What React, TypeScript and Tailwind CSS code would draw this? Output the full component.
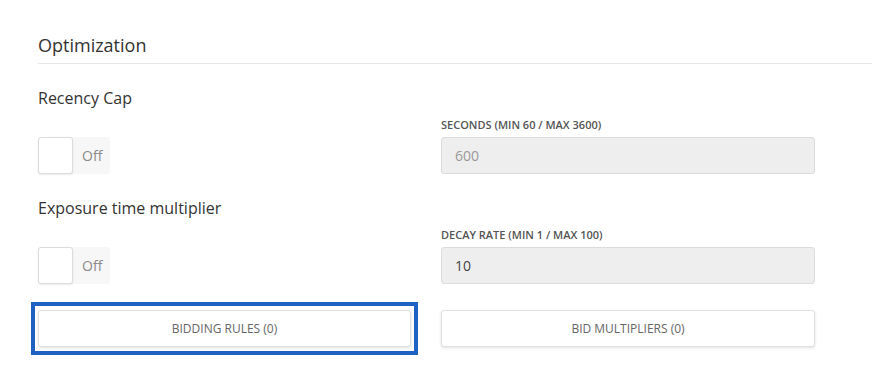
import React from "react";

function Toggle() {
  return (
    <div className="flex h-[37px] w-[72px] items-center rounded-[3px] bg-[#f7f7f7]">
      <div className="h-[37px] w-[35px] rounded-[3px] border border-[#dcdcdc] bg-white shadow-[0_1px_2px_rgba(0,0,0,0.08)]" />
      <span className="ml-[9px] text-[14px] text-[#8a8a8a]">Off</span>
    </div>
  );
}

function Field({ label, value, muted }: { label: string; value: string; muted?: boolean }) {
  return (
    <div className="flex flex-col">
      <div className="mb-[4px] text-[11px] font-semibold leading-[16px] text-[#555]">{label}</div>
      <div className="flex h-[37px] items-center rounded-[3px] border border-[#dcdcdc] bg-[#eeeeee] px-[13px]">
        <span className={"text-[14px] " + (muted ? "text-[#999]" : "text-[#444]")}>{value}</span>
      </div>
    </div>
  );
}

export default function App() {
  return (
    <div
      className="h-[370px] w-[872px] overflow-hidden bg-white pl-[38px] pt-[33px] text-[#333]"
      style={{ fontFamily: '"Open Sans", "Liberation Sans", sans-serif' }}
    >
      <div className="border-b border-[#e6e6e6] pb-[6px] text-[18px] leading-[24px] text-[#333]">Optimization</div>

      <div className="mt-[23px] grid grid-cols-[373px_374px] items-end gap-x-[30px]">
        <div className="flex flex-col">
          <div className="mb-[28px] text-[16px] leading-[22px]">Recency Cap</div>
          <Toggle />
        </div>
        <Field label="SECONDS (MIN 60 / MAX 3600)" value="600" muted />
      </div>

      <div className="mt-[23px] grid grid-cols-[373px_374px] items-end gap-x-[30px]">
        <div className="flex flex-col">
          <div className="mb-[28px] text-[16px] leading-[22px]">Exposure time multiplier</div>
          <Toggle />
        </div>
        <Field label="DECAY RATE (MIN 1 / MAX 100)" value="10" />
      </div>

      <div className="mt-[26px] grid grid-cols-[373px_374px] items-start gap-x-[30px]">
        <div className="relative">
          <div className="pointer-events-none absolute left-[-7px] right-[-7px] top-[-8px] bottom-[-8px] border-[4px] border-[#1f62c1]" />
          <button className="flex h-[37px] w-full items-center justify-center rounded-[3px] border border-[#e0e0e0] bg-white text-[12px] text-[#666] shadow-[0_1px_3px_rgba(0,0,0,0.12)]">
            BIDDING RULES (0)
          </button>
        </div>
        <button className="flex h-[37px] w-full items-center justify-center rounded-[3px] border border-[#e0e0e0] bg-white text-[12px] text-[#666] shadow-[0_1px_3px_rgba(0,0,0,0.12)]">
          BID MULTIPLIERS (0)
        </button>
      </div>
    </div>
  );
}
